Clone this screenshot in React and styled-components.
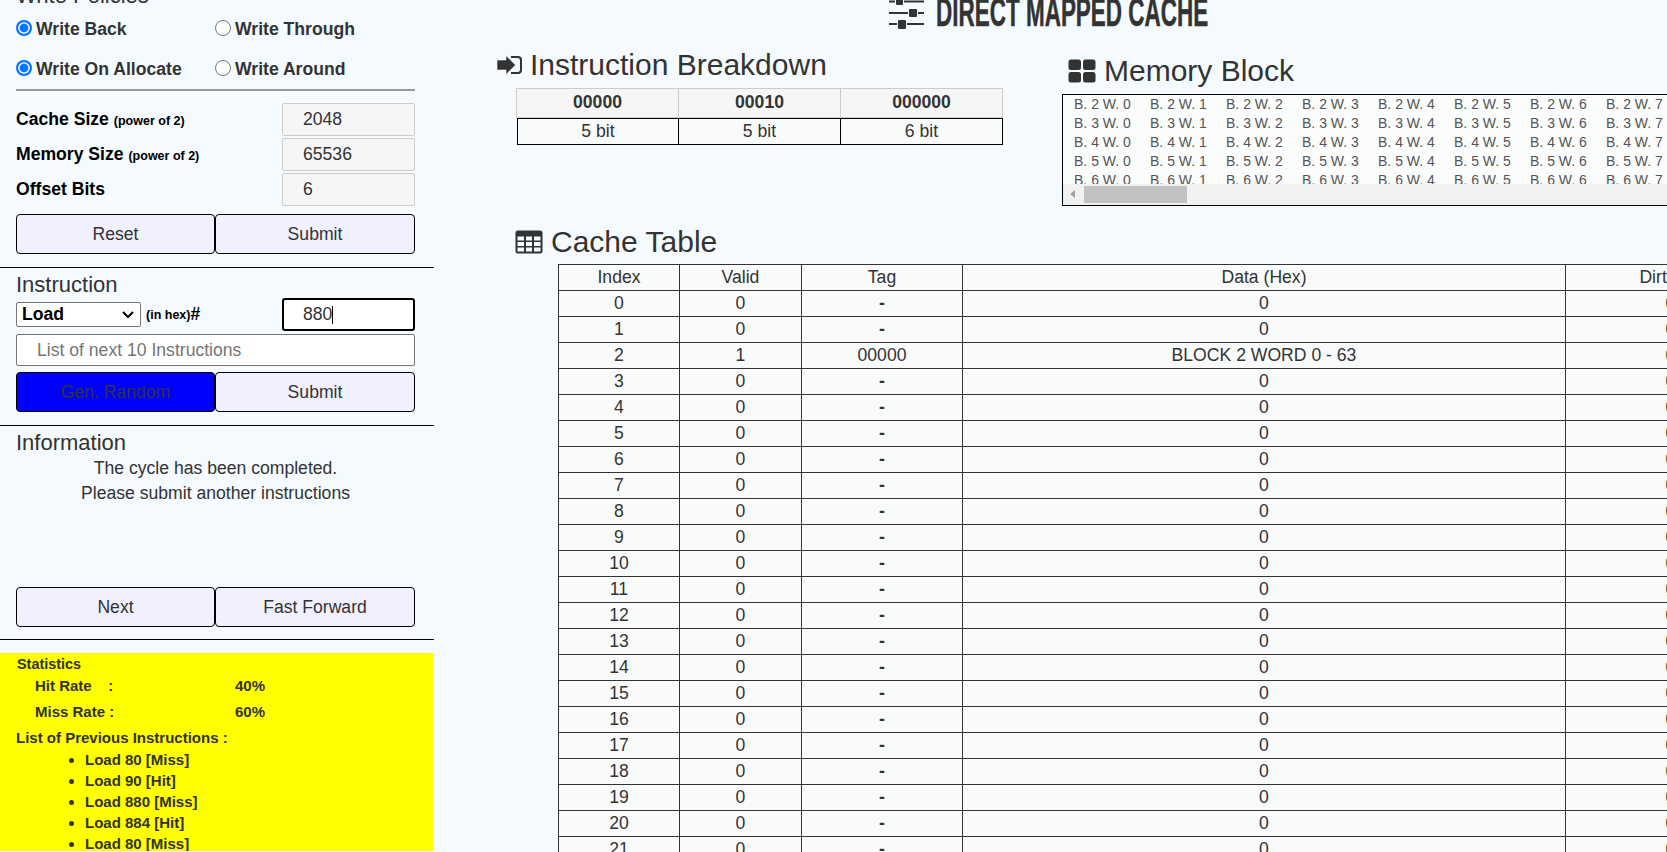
import React from "react";
import styled, { createGlobalStyle } from "styled-components";

const Global = createGlobalStyle`
  html, body { margin: 0; padding: 0; height: 852px; overflow: hidden; background: #f4fafe; }
  body { font-family: "Liberation Sans", Arial, sans-serif; color: #333; font-size: 17.6px; }
  * { box-sizing: border-box; }
`;

const Page = styled.div`
  display: flex;
  width: 1667px;
  height: 852px;
  overflow: hidden;
  background: #f4fafe;
`;

const Sidebar = styled.aside`
  flex: 0 0 434px;
  width: 434px;
  height: 852px;
  overflow: hidden;
`;

const Section = styled.section`
  padding: 0 19px 0 16px;
  margin-top: ${p => p.$top || 0}px;
`;

const SectionHeading = styled.h3`
  margin: 0;
  font-size: 22px;
  font-weight: 400;
  line-height: 26px;
  color: #333;
`;

const ClippedHeading = styled(SectionHeading)`
  margin-top: -17px;
  height: 26px;
`;

const RadioRow = styled.div`
  display: grid;
  grid-template-columns: 199px 1fr;
  height: 40px;
  align-items: center;
`;

const RadioLabel = styled.label`
  display: flex;
  align-items: center;
  gap: 4px;
  font-size: 17.6px;
  font-weight: 700;
  color: #333;
`;

const Radio = styled.span`
  display: inline-block;
  flex: none;
  width: 16px;
  height: 16px;
  border-radius: 50%;
  margin-top: -3px;
  border: ${p => (p.$on ? "2px solid #0075ff" : "1px solid #767676")};
  box-shadow: ${p => (p.$on ? "inset 0 0 0 1.6px #fff" : "none")};
  background-color: ${p => (p.$on ? "#0075ff" : "#fff")};
`;

const Rule = styled.hr`
  margin: 0;
  border: 0;
  height: 2px;
  background: #999;
`;

const FieldRow = styled.div`
  display: flex;
  justify-content: space-between;
  align-items: center;
  height: 33px;
  margin-bottom: ${p => p.$mb ?? 2}px;
  margin-top: ${p => p.$mt ?? 0}px;
`;

const FieldLabel = styled.div`
  font-size: 17.6px;
  font-weight: 700;
  color: #000;
  white-space: nowrap;
`;

const Small = styled.small`
  font-size: 12.5px;
  font-weight: 700;
  color: #000;
`;

const ReadOnlyInput = styled.div`
  width: 133px;
  height: 33px;
  padding: 0 20px;
  display: flex;
  align-items: center;
  font-size: 17.6px;
  color: #333;
  background: #f5f6f5;
  border: 1px solid #ccc;
  border-radius: 2px;
`;

const ActiveInput = styled.div`
  width: 133px;
  height: 33px;
  padding: 0 19px;
  display: flex;
  align-items: center;
  font-size: 17.6px;
  color: #333;
  background: #fff;
  border: 2px solid #000;
  border-radius: 3px;
  margin-left: auto;
`;

const Caret = styled.span`
  display: inline-block;
  width: 1px;
  height: 18px;
  background: #000;
`;

const ButtonRow = styled.div`
  display: grid;
  grid-template-columns: 199px 200px;
  margin-top: ${p => p.$top || 0}px;
`;

const Button = styled.button`
  height: 40px;
  padding: 0;
  font: 400 17.6px "Liberation Sans", Arial, sans-serif;
  color: #333;
  background: ${p => (p.$blue ? "#0000ff" : "#f0f0ff")};
  border: 1px solid #000;
  border-radius: 4px;
`;

const Divider = styled.hr`
  margin: 0;
  border: 0;
  height: 1px;
  background: #000;
  margin-top: ${p => p.$top || 0}px;
`;

const InstructionRow = styled.div`
  display: flex;
  align-items: center;
  height: 33px;
`;

const SelectBox = styled.div`
  position: relative;
  width: 125px;
  height: 25px;
  background: #fff;
  border: 1px solid #767676;
  border-radius: 2px;
  padding-left: 5px;
  font-size: 17.6px;
  font-weight: 700;
  line-height: 22px;
  color: #000;
  margin-right: 5px;
`;

const Chevron = styled.svg`
  position: absolute;
  right: 6px;
  top: 8px;
`;

const Hash = styled.span`
  font-size: 17.6px;
  font-weight: 700;
  color: #000;
`;

const ListInput = styled.div`
  height: 32px;
  margin-top: 3px;
  padding: 0 20px;
  display: flex;
  align-items: center;
  font-size: 17.6px;
  color: #757575;
  background: #fff;
  border: 1px solid #767676;
  border-radius: 2px;
`;

const InfoBody = styled.div`
  height: 130px;
  text-align: center;
  font-size: 17.6px;
  line-height: 25px;
  color: #333;
`;

const Stats = styled.div`
  margin-top: 13px;
  height: 198px;
  overflow: hidden;
  background: #ff0;
  padding: 3px 16px 0;
  font-size: 15px;
  font-weight: 700;
  color: #333;
`;

const StatsTitle = styled.div`
  font-size: 14.4px;
  line-height: 17px;
  padding-left: 1px;
`;

const StatRow = styled.div`
  display: grid;
  grid-template-columns: 200px 1fr;
  padding-left: 19px;
  height: 26px;
  line-height: 26px;
  white-space: pre;
`;

const ListTitle = styled.div`
  line-height: 21px;
  margin-top: 2px;
  margin-bottom: 1px;
`;

const PrevList = styled.ul`
  margin: 0;
  padding: 0 0 0 69px;
  list-style: disc;
`;

const PrevItem = styled.li`
  line-height: 21px;
`;

const Main = styled.main`
  flex: 1;
  min-width: 0;
  height: 852px;
  overflow: hidden;
`;

const Title = styled.h1`
  margin: 0;
  height: 47px;
  display: flex;
  align-items: flex-start;
  padding-left: 455px;
  gap: 12px;
`;

const TitleText = styled.span`
  display: inline-block;
  flex: none;
  width: 272px;
  margin-top: -8px;
  font-size: 40px;
  font-weight: 700;
  line-height: 40px;
  white-space: nowrap;
  color: #333;
  -webkit-text-stroke: 0.5px #333;
  transform: scaleX(0.562);
  transform-origin: left center;
`;

const TopRow = styled.div`
  display: flex;
  align-items: flex-start;
`;

const BreakdownCol = styled.div`
  flex: 0 0 634px;
  padding-left: 63px;
`;

const PanelHeading = styled.h2`
  display: flex;
  align-items: center;
  gap: 8px;
  margin: 0;
  font-size: 30px;
  font-weight: 400;
  line-height: 35px;
  white-space: nowrap;
  color: #333;
`;

const BitGrid = styled.div`
  display: grid;
  grid-template-columns: repeat(3, 162px);
  margin: 6px 0 0 19px;
  width: 486px;
`;

const BitHead = styled.div`
  height: 30px;
  background: #f5f6f5;
  border: 1px solid #ccc;
  margin-right: -1px;
  text-align: center;
  font-weight: 700;
  font-size: 17.6px;
  line-height: 27px;
  color: #333;
`;

const BitCell = styled.div`
  height: 27px;
  background: #f9fbfa;
  border: 1px solid #000;
  margin-left: 1px;
  margin-right: -1px;
  text-align: center;
  font-size: 17.6px;
  line-height: 25px;
  color: #333;
  border-left-width: ${p => (p.$first ? 1 : 0)}px;
`;

const MemoryCol = styled.div`
  flex: 1;
  min-width: 0;
  padding-top: 6px;
`;

const MemoryBox = styled.div`
  position: relative;
  height: 112px;
  width: 900px;
  margin: 6px 0 0 -6px;
  background: #fbfcfc;
  border: 1px solid #000;
  overflow: hidden;
  padding: 0 0 0 11px;
`;

const MemoryRow = styled.div`
  display: flex;
  height: 19px;
  line-height: 19px;
  font-size: 14px;
  color: #555;
`;

const MemoryCell = styled.span`
  flex: 0 0 76px;
  white-space: nowrap;
`;

const ScrollTrack = styled.div`
  position: absolute;
  left: 0;
  right: 0;
  bottom: 0;
  height: 21px;
  background: #f1f1f1;
`;

const ScrollArrow = styled.span`
  position: absolute;
  left: 7px;
  top: 6px;
  width: 0;
  height: 0;
  border-style: solid;
  border-width: 4.5px 5px 4.5px 0;
  border-color: transparent #a3a3a3 transparent transparent;
`;

const ScrollThumb = styled.span`
  position: absolute;
  left: 21px;
  top: 2px;
  width: 103px;
  height: 17px;
  background: #c1c1c1;
`;

const TableSection = styled.div`
  margin-top: 18px;
  padding-left: 81px;
`;

const CacheTable = styled.table`
  margin: 5px 0 0 43px;
  border-collapse: collapse;
  table-layout: fixed;
  width: 1217px;
  background: #f9fbfa;
`;

const Th = styled.th`
  height: 26px;
  padding: 0 ${p => p.$pr || 0}px 0 0;
  border: 1px solid #333;
  font-weight: 400;
  font-size: 17.6px;
  color: #333;
  width: ${p => p.$w}px;
`;

const Td = styled.td`
  height: 26px;
  padding: 0;
  border: 1px solid #333;
  text-align: center;
  font-size: 17.6px;
  font-weight: ${p => (p.$strong ? 700 : 400)};
  color: #333;
`;

const Icon = styled.svg`
  flex: none;
`;

const LoginIcon = () => (
  <Icon width="25" height="24" viewBox="0 0 25 24" fill="#333">
    <path d="M14 3h7a4 4 0 0 1 4 4v10a4 4 0 0 1-4 4h-7v-2h6.500a2.500 2.500 0 0 0 2.500-2.500v-9A2.500 2.500 0 0 0 20.500 5H14z" />
    <path d="M0 7h9V2.500L18.500 12 9 21.500V17H0z" stroke="#f4fafe" strokeWidth="0.6" />
  </Icon>
);

const TilesIcon = () => (
  <Icon width="28" height="24" viewBox="0 0 28 24" fill="#333">
    <rect x="0.500" y="0.500" width="12.500" height="10.500" rx="2.500" />
    <rect x="15" y="0.500" width="12.500" height="10.500" rx="2.500" />
    <rect x="0.500" y="13" width="12.500" height="10.500" rx="2.500" />
    <rect x="15" y="13" width="12.500" height="10.500" rx="2.500" />
  </Icon>
);

const TableIcon = () => (
  <Icon width="28" height="24" viewBox="0 0 28 24">
    <path fill="#333" fillRule="evenodd" d="M3 .5h22a2.500 2.500 0 0 1 2.500 2.500v18a2.500 2.500 0 0 1-2.500 2.500H3A2.500 2.500 0 0 1 .5 21V3A2.500 2.500 0 0 1 3 .5zM2.500 6.500v4H9v-4zM11 6.500v4h6v-4zM19 6.500v4h6.500v-4zM2.500 12v4H9v-4zM11 12v4h6v-4zM19 12v4h6.500v-4zM2.500 17.500v4H9v-4zM11 17.500v4h6v-4zM19 17.500v4h6.500v-4z" />
  </Icon>
);

const SlidersIcon = () => (
  <Icon width="35" height="30" viewBox="0 0 35 30" fill="#333">
    <rect x="0" y="0.500" width="6" height="2" />
    <rect x="15" y="0.500" width="20" height="2" />
    <rect x="7" y="-3" width="7" height="8" rx="1" />
    <rect x="0" y="12" width="19" height="2" />
    <rect x="29" y="12" width="6" height="2" />
    <rect x="20" y="9" width="8" height="8" rx="1" />
    <rect x="0" y="23" width="8" height="2" />
    <rect x="18" y="23" width="17" height="2" />
    <rect x="9" y="20" width="8" height="9" rx="1" />
  </Icon>
);

const rows = Array.from({ length: 22 }, (_, i) => i);
const memBlocks = [2, 3, 4, 5, 6];
const memWords = Array.from({ length: 8 }, (_, i) => i);
const prev = ["Load 80 [Miss]", "Load 90 [Hit]", "Load 880 [Miss]", "Load 884 [Hit]", "Load 80 [Miss]"];

export default function App() {
  return (
    <Page>
      <Global />
      <Sidebar>
        <Section>
          <ClippedHeading>Write Policies</ClippedHeading>
          <RadioRow>
            <RadioLabel><Radio $on />Write Back</RadioLabel>
            <RadioLabel><Radio />Write Through</RadioLabel>
          </RadioRow>
          <RadioRow>
            <RadioLabel><Radio $on />Write On Allocate</RadioLabel>
            <RadioLabel><Radio />Write Around</RadioLabel>
          </RadioRow>
          <Rule />
          <FieldRow $mt={12}>
            <FieldLabel>Cache Size <Small>(power of 2)</Small></FieldLabel>
            <ReadOnlyInput>2048</ReadOnlyInput>
          </FieldRow>
          <FieldRow>
            <FieldLabel>Memory Size <Small>(power of 2)</Small></FieldLabel>
            <ReadOnlyInput>65536</ReadOnlyInput>
          </FieldRow>
          <FieldRow $mb={0}>
            <FieldLabel>Offset Bits</FieldLabel>
            <ReadOnlyInput>6</ReadOnlyInput>
          </FieldRow>
          <ButtonRow $top={8}>
            <Button>Reset</Button>
            <Button>Submit</Button>
          </ButtonRow>
        </Section>
        <Divider $top={13} />
        <Section $top={4}>
          <SectionHeading>Instruction</SectionHeading>
          <InstructionRow>
            <SelectBox>
              Load
              <Chevron width="12" height="8" viewBox="0 0 12 8" fill="none" stroke="#000" strokeWidth="2"><path d="M1 1l5 5 5-5" /></Chevron>
            </SelectBox>
            <Small>(in hex)</Small><Hash>#</Hash>
            <ActiveInput>880<Caret /></ActiveInput>
          </InstructionRow>
          <ListInput>List of next 10 Instructions</ListInput>
          <ButtonRow $top={6}>
            <Button $blue>Gen. Random</Button>
            <Button>Submit</Button>
          </ButtonRow>
        </Section>
        <Divider $top={13} />
        <Section $top={4}>
          <SectionHeading>Information</SectionHeading>
          <InfoBody>The cycle has been completed.<br />Please submit another instructions</InfoBody>
          <ButtonRow $top={1}>
            <Button>Next</Button>
            <Button>Fast Forward</Button>
          </ButtonRow>
        </Section>
        <Divider $top={12} />
        <Stats>
          <StatsTitle>Statistics</StatsTitle>
          <StatRow><span>Hit Rate    :</span><span>40%</span></StatRow>
          <StatRow><span>Miss Rate :</span><span>60%</span></StatRow>
          <ListTitle>List of Previous Instructions :</ListTitle>
          <PrevList>{prev.map((p, i) => <PrevItem key={i}>{p}</PrevItem>)}</PrevList>
        </Stats>
      </Sidebar>
      <Main>
        <Title><SlidersIcon /><TitleText>DIRECT MAPPED CACHE</TitleText></Title>
        <TopRow>
          <BreakdownCol>
            <PanelHeading><LoginIcon />Instruction Breakdown</PanelHeading>
            <BitGrid>
              <BitHead>00000</BitHead><BitHead>00010</BitHead><BitHead>000000</BitHead>
              <BitCell $first>5 bit</BitCell><BitCell>5 bit</BitCell><BitCell>6 bit</BitCell>
            </BitGrid>
          </BreakdownCol>
          <MemoryCol>
            <PanelHeading><TilesIcon />Memory Block</PanelHeading>
            <MemoryBox>
              {memBlocks.map(b => (
                <MemoryRow key={b}>
                  {memWords.map(w => <MemoryCell key={w}>B. {b} W. {w}</MemoryCell>)}
                </MemoryRow>
              ))}
              <ScrollTrack><ScrollArrow /><ScrollThumb /></ScrollTrack>
            </MemoryBox>
          </MemoryCol>
        </TopRow>
        <TableSection>
          <PanelHeading><TableIcon />Cache Table</PanelHeading>
          <CacheTable>
            <thead>
              <tr>
                <Th $w={121}>Index</Th>
                <Th $w={122}>Valid</Th>
                <Th $w={161}>Tag</Th>
                <Th $w={603}>Data (Hex)</Th>
                <Th $w={210} $pr={26}>Dirty</Th>
              </tr>
            </thead>
            <tbody>
              {rows.map(i => (
                <tr key={i}>
                  <Td>{i}</Td>
                  <Td>{i === 2 ? 1 : 0}</Td>
                  <Td $strong={i !== 2}>{i === 2 ? "00000" : "-"}</Td>
                  <Td>{i === 2 ? "BLOCK 2 WORD 0 - 63" : 0}</Td>
                  <Td>0</Td>
                </tr>
              ))}
            </tbody>
          </CacheTable>
        </TableSection>
      </Main>
    </Page>
  );
}
